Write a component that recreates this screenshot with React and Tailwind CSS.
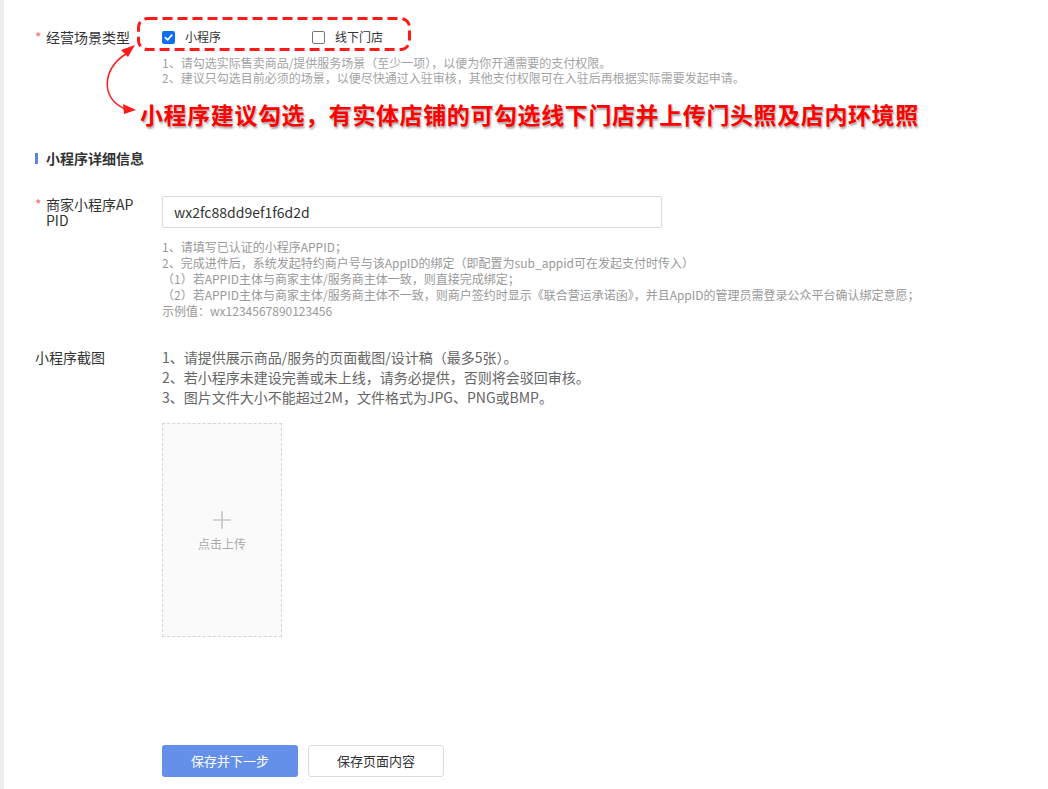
import { Plus } from 'lucide-react';

function Hint({ children }) {
  return <div className="text-[12px] leading-[16px] text-[#999]">{children}</div>;
}

function Check({ checked, label, className }) {
  return (
    <label className={`flex items-center gap-[10px] ${className || ''}`}>
      {checked ? (
        <span className="w-[13px] h-[13px] rounded-[2px] bg-[#0b6ff0] flex items-center justify-center">
          <svg viewBox="0 0 12 12" className="w-[11px] h-[11px]">
            <path d="M2.5 6.2 L5 8.6 L9.6 3.4" fill="none" stroke="white" strokeWidth="1.8" strokeLinecap="round" strokeLinejoin="round" />
          </svg>
        </span>
      ) : (
        <span className="w-[13px] h-[13px] rounded-[2px] border border-[#767676] bg-white" />
      )}
      <span className="text-[12px] text-[#333]">{label}</span>
    </label>
  );
}

export default function App() {
  return (
    <div className="relative flex min-h-[789px] bg-white font-['Noto_Sans_CJK_SC',sans-serif]">
      <div className="w-[4px] shrink-0 bg-[#eeeeee]" />

      <div className="flex-1 pl-[31px] pt-[27px]">
        {/* 经营场景类型 */}
        <div className="flex">
          <div className="w-[127px] flex text-[14px] leading-[20px] text-[#333]">
            <span className="w-[11px] text-[#f56c6c]">*</span>
            <span>经营场景类型</span>
          </div>
          <div className="flex items-center h-[20px]">
            <Check checked label="小程序" className="w-[150px]" />
            <Check label="线下门店" />
          </div>
        </div>
        <div className="ml-[127px] mt-[8px] text-[12px] leading-[15px] text-[#a3a3a3]">
          <div>1、请勾选实际售卖商品/提供服务场景（至少一项），以便为你开通需要的支付权限。</div>
          <div>2、建议只勾选目前必须的场景，以便尽快通过入驻审核，其他支付权限可在入驻后再根据实际需要发起申请。</div>
        </div>

        <div className="ml-[105px] mt-[15px] text-[23px] leading-[28px] tracking-[0.6px] font-semibold text-[#ff0000] [text-shadow:1px_2px_2px_rgba(0,0,0,0.35)]">
          小程序建议勾选，有实体店铺的可勾选线下门店并上传门头照及店内环境照
        </div>

        {/* 小程序详细信息 */}
        <div className="mt-[20px] flex items-center h-[20px]">
          <span className="w-[3px] h-[11px] bg-[#5b86e5]" />
          <span className="ml-[8px] text-[14px] font-bold text-[#333]">小程序详细信息</span>
        </div>

        <div className="mt-[28px] flex h-[32px]">
          <div className="w-[127px] flex text-[14px] leading-[16px] text-[#333]">
            <span className="w-[11px] text-[#f56c6c]">*</span>
            <div>
              <div>商家小程序AP</div>
              <div>PID</div>
            </div>
          </div>
          <div className="w-[500px] h-[32px] border border-[#dcdcdc] rounded-[2px] px-[11px] flex items-center text-[14px] text-[#333]">
            wx2fc88dd9ef1f6d2d
          </div>
        </div>
        <div className="ml-[127px] mt-[11px]">
          <Hint>1、请填写已认证的小程序APPID；</Hint>
          <Hint>2、完成进件后，系统发起特约商户号与该AppID的绑定（即配置为sub_appid可在发起支付时传入）</Hint>
          <Hint>（1）若APPID主体与商家主体/服务商主体一致，则直接完成绑定；</Hint>
          <Hint>（2）若APPID主体与商家主体/服务商主体不一致，则商户签约时显示《联合营运承诺函》，并且AppID的管理员需登录公众平台确认绑定意愿；</Hint>
          <Hint>示例值：wx1234567890123456</Hint>
        </div>

        {/* 小程序截图 */}
        <div className="mt-[28px] flex">
          <div className="w-[127px] text-[14px] leading-[20px] text-[#333]">小程序截图</div>
          <div className="text-[14px] leading-[20px] text-[#666]">
            <div>1、请提供展示商品/服务的页面截图/设计稿（最多5张）。</div>
            <div>2、若小程序未建设完善或未上线，请务必提供，否则将会驳回审核。</div>
            <div>3、图片文件大小不能超过2M，文件格式为JPG、PNG或BMP。</div>
          </div>
        </div>
        <div className="ml-[127px] mt-[16px] w-[120px] h-[214px] border border-dashed border-[#d5d5d5] bg-[#fafafa] flex flex-col items-center justify-center">
          <Plus className="w-[28px] h-[28px] text-[#c8c8c8] -mt-[2px]" strokeWidth={1.4} />
          <span className="mt-[1px] text-[12px] text-[#aaa]">点击上传</span>
        </div>

        <div className="ml-[127px] mt-[108px] flex gap-[10px]">
          <button className="w-[136px] h-[32px] rounded-[3px] bg-[#6490ea] text-white text-[13px]">保存并下一步</button>
          <button className="w-[136px] h-[32px] rounded-[3px] border border-[#dcdcdc] bg-white text-[#333] text-[13px]">保存页面内容</button>
        </div>
      </div>

      {/* annotation overlay */}
      <svg className="absolute left-0 top-0 pointer-events-none" width="450" height="130">
        <rect x="138.5" y="18.5" width="271" height="31" rx="9" fill="none" stroke="#ff1a1a" strokeWidth="3" strokeDasharray="10 5" />
        <path d="M126 54 C 102 68, 100 100, 126 109" fill="none" stroke="#ff1a1a" strokeWidth="1.5" />
        <path d="M135 45 L121 50 L128 57 Z" fill="#ff1a1a" />
        <path d="M136 110 L123 104 L124 114 Z" fill="#ff1a1a" />
      </svg>
    </div>
  );
}
